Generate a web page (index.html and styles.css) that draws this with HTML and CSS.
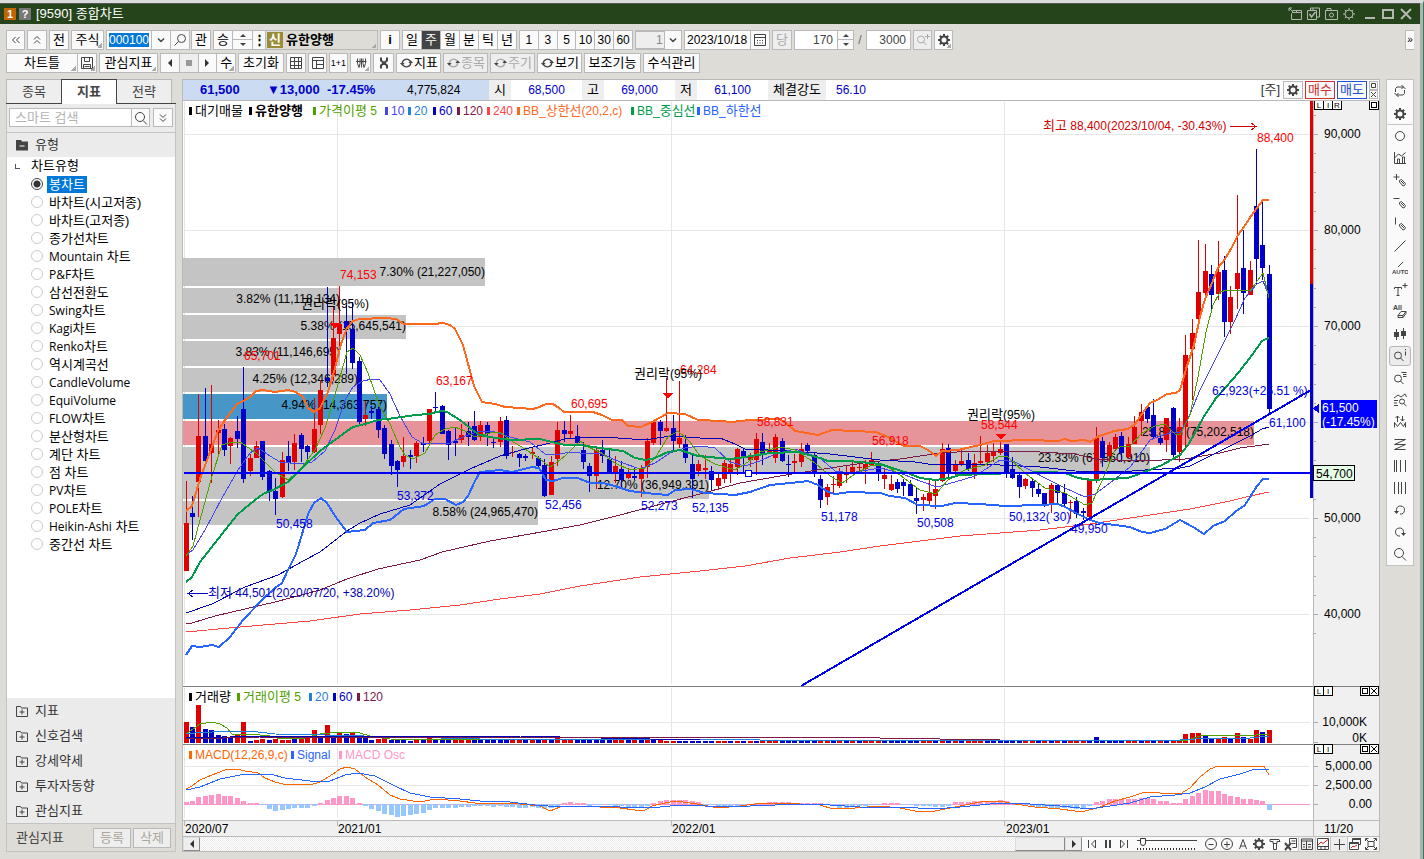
FILE: index.html
```html
<!DOCTYPE html>
<html lang="ko">
<head>
<meta charset="utf-8">
<title>[9590] 종합차트</title>
<link rel="stylesheet" href="styles.css">
</head>
<body>
<svg class="sprite" aria-hidden="true">
  <symbol id="search" viewBox="0 0 16 16"><circle cx="7" cy="7" r="4.500"/><path d="M10 10.500l4 4"/></symbol>
  <symbol id="searchl" viewBox="0 0 16 16"><circle cx="9.500" cy="6.500" r="4"/><path d="M6.500 9.500l-4 4"/></symbol>
  <symbol id="gear" viewBox="0 0 16 16"><circle cx="8" cy="8" r="3.500" stroke-width="2"/><path stroke-width="2" d="M8 2v2.500M8 11.500v2.500M2 8h2.500M11.500 8h2.500M3.800 3.800l1.500 1.500M10.700 10.700l1.500 1.500M12.200 3.800l-1.500 1.500M5.300 10.700l-1.500 1.500"/></symbol>
  <symbol id="geart" viewBox="0 0 16 16"><circle cx="8" cy="8" r="4"/><path d="M8 2v2M8 12v2M2 8h2M12 8h2M3.800 3.800l1.500 1.500M10.700 10.700l1.500 1.500M12.200 3.800l-1.500 1.500M5.300 10.700l-1.500 1.500"/></symbol>
  <symbol id="chev" viewBox="0 0 16 16"><path stroke-width="1.500" d="M5 6.500l3 3 3-3"/></symbol>
  <symbol id="dleft" viewBox="0 0 16 16"><path d="M7.500 5l-3 3 3 3M11.500 5l-3 3 3 3"/></symbol>
  <symbol id="dup" viewBox="0 0 16 16"><path d="M5 7.500l3-3 3 3M5 11.500l3-3 3 3"/></symbol>
  <symbol id="ddown" viewBox="0 0 16 16"><path d="M5 4.500l3 3 3-3M5 8.500l3 3 3-3"/></symbol>
  <symbol id="save" viewBox="0 0 16 16"><path d="M2.500 2.500h11v11h-11zM5.500 2.500v4h5v-4M4.500 13.500v-4h7v4M5.500 11.500h5"/></symbol>
  <symbol id="grid" viewBox="0 0 16 16"><path d="M2.500 2.500h11v11h-11zM2.500 6.500h11M2.500 10.500h11M6.500 2.500v11M10.500 2.500v11"/></symbol>
  <symbol id="layout" viewBox="0 0 16 16"><path d="M2.500 2.500h11v11h-11zM2.500 5.500h11M6.500 5.500v8M6.500 9.500h7"/></symbol>
  <symbol id="won" viewBox="0 0 16 16"><path d="M4.500 3.500v5l1.500 4 1-4v-5M8.500 3.500v9M10 3.500v5l1 4 1.500-4v-5M3 6.500h10.500"/></symbol>
  <symbol id="tools" viewBox="0 0 16 16"><path stroke-width="2" d="M5 2.500v3l6 5v3M11 2.500v3l-6 5v3"/></symbol>
  <symbol id="sync" viewBox="0 0 16 16"><path stroke-width="1.500" d="M3.500 8.500c0-5 6-6 8.500-2.500M12.500 7.500c0 5-6 6-8.500 2.500"/><path class="fill" d="M1 8h5l-2.500 3zM10 8h5l-2.500-3z"/></symbol>
  <symbol id="cal" viewBox="0 0 16 16"><path d="M2.500 2.500h11v11h-11zM2.500 5.500h11M5 8.500h1M7.500 8.500h1M10 8.500h1M5 11h1M7.500 11h1M10 11h1"/></symbol>
  <symbol id="zoomp" viewBox="0 0 16 16"><circle cx="6" cy="7.500" r="3.500"/><path d="M8.500 10l3 3M12.500 2v5M10 4.500h5"/></symbol>
  <symbol id="pop" viewBox="0 0 16 16"><path d="M5.500 4.500h9v9h-10v-6M5 6.500h9M9.500 4.500v2M2 2l4 4M2 5v-3h3"/></symbol>
  <symbol id="copycheck" viewBox="0 0 16 16"><path d="M2.500 4.500h9v9h-9zM5.500 4v-2h9v9h-3M8 2v2.500"/><path stroke-width="1.500" d="M4.500 8l2 3 4-5"/></symbol>
  <symbol id="camera" viewBox="0 0 16 16"><path d="M2.500 4.500h12v9h-12zM4 4.500v-2h4v2"/><circle cx="8.500" cy="9" r="2"/></symbol>
  <symbol id="loop" viewBox="0 0 16 16"><path d="M3.500 9v-3.500l1.500-1.500h6.500l2 2M9.500 2l2 2-2 2M12.500 7v3.500l-1.500 1.500h-6.500l-2-2M6.500 10l-2 2 2 2"/></symbol>
  <symbol id="circle" viewBox="0 0 16 16"><circle cx="8" cy="8" r="4.500"/></symbol>
  <symbol id="chartb" viewBox="0 0 16 16"><path d="M2.500 2v11.500h11.500M2.500 8l4-4 3 2 4-3.500M5.500 13v-4h2v4M10.500 13v-6h2v6"/></symbol>
  <symbol id="pencilp" viewBox="0 0 16 16"><path d="M1.500 5h6M4.500 2v6M7.500 8.500l2-1 4 4-1 2-1.500.5-3.500-4zM9 9l3 3"/></symbol>
  <symbol id="pencilh" viewBox="0 0 16 16"><path d="M1.500 4.500h6M7.500 8.500l2-1 4 4-1 2-1.500.5-3.500-4zM9 9l3 3"/></symbol>
  <symbol id="pencilv" viewBox="0 0 16 16"><path d="M3.500 1.500v7M7.500 8.500l2-1 4 4-1 2-1.500.5-3.500-4zM9 9l3 3"/></symbol>
  <symbol id="line" viewBox="0 0 16 16"><path d="M2.500 13.500l11-11"/></symbol>
  <symbol id="auto" viewBox="0 0 16 16"><path d="M6 7l5-5"/><text x="0" y="14" font-size="6">AUTO</text></symbol>
  <symbol id="textp" viewBox="0 0 16 16"><path d="M2.500 7v-1.500h7V7M6 5.500v8M4.500 13.500h3M10.500 3.500h5M13 1v5"/></symbol>
  <symbol id="eraser" viewBox="0 0 16 16"><text x="1" y="6" font-size="7">All</text><path d="M6 11.500l3-4h5v2l-3 4h-5zM6 11.500h5v2M11 11.500l3-4"/></symbol>
  <symbol id="candles" viewBox="0 0 16 16"><path d="M4.500 3v11M11.500 2v11"/><path class="fill" d="M2 6h5v5h-5zM9 5h5v5h-5z"/></symbol>
  <symbol id="searchi" viewBox="0 0 16 16"><circle cx="6" cy="7.500" r="3.500"/><path d="M8.500 10l3 3M13.500 1v1.200M13.500 3.500v4"/></symbol>
  <symbol id="searche" viewBox="0 0 16 16"><circle cx="6" cy="8.500" r="3.500"/><path d="M8.500 11l3 3M9.500 2.500h5M11 4.500h3.500M11 6.500h3.500"/></symbol>
  <symbol id="searchc" viewBox="0 0 16 16"><path d="M2 6l4-3 3 2 4-3 1.500 3M2 8.500h4M2 11h3M2 13.500h4"/><circle cx="10" cy="9.500" r="2.500"/><path d="M11.500 11.500l3 2.500"/></symbol>
  <symbol id="wave" viewBox="0 0 16 16"><path d="M2.500 13.500v-5l3 4 3-4 3 4 2-4v5M5.500 8v-6M3.500 4l2-2 2 2M10.500 2v5M8.500 5l2 2 2-2"/></symbol>
  <symbol id="zz" viewBox="0 0 16 16"><path d="M2.500 3.500h11M2.500 8.500h11M2.500 13.500h11M13.500 3.500l-11 5M13.500 8.500l-11 5"/></symbol>
  <symbol id="bars5" viewBox="0 0 16 16"><path d="M2.500 2v12M4.500 2v12M8.500 2v12M13.500 2v12"/></symbol>
  <symbol id="bars4" viewBox="0 0 16 16"><path d="M2.500 2v12M6.500 2v12M9.500 2v12M13.500 2v12"/></symbol>
  <symbol id="undo" viewBox="0 0 16 16"><path d="M4.500 9.500v-2a4 4 0 1 1 3.500 4.500"/><path class="fill" d="M2 9h5l-2.500 3z"/></symbol>
  <symbol id="redo" viewBox="0 0 16 16"><path d="M11.500 9.500v-2a4 4 0 1 0-3.500 4.500"/><path class="fill" d="M9 9h5l-2.500 3z"/></symbol>
  <symbol id="first" viewBox="0 0 16 16"><path d="M4.500 4v8M11.500 4v8l-4-4z"/></symbol>
  <symbol id="pause" viewBox="0 0 16 16"><path stroke-width="2" d="M6 4v8M10 4v8"/></symbol>
  <symbol id="last" viewBox="0 0 16 16"><path d="M11.500 4v8M4.500 4v8l4-4z"/></symbol>
  <symbol id="minusc" viewBox="0 0 16 16"><circle cx="8" cy="8" r="5.500"/><path d="M5.500 8.500h5"/></symbol>
  <symbol id="plusc" viewBox="0 0 16 16"><circle cx="8" cy="8" r="5.500"/><path d="M5 8.500h6M8 5.500v6"/></symbol>
  <symbol id="aa" viewBox="0 0 16 16"><path d="M4.500 13l3.500-9.500 3.500 9.500M5.500 10h5"/></symbol>
  <symbol id="hammer" viewBox="0 0 16 16"><path d="M3 3.500h9l1 2h-3v2h-4v-2h-3zM6.500 7.500v6h3v-6"/></symbol>
  <symbol id="xl" viewBox="0 0 16 16"><path d="M6.500 7v-4.500h7v9h-4M8.500 5h4M8.500 7.500h4"/><path stroke-width="2" d="M2 7l6 7M8 7l-6 7"/></symbol>
  <symbol id="panel" viewBox="0 0 16 16"><path d="M2.500 3h11v10.500h-11zM2.500 5h11M7.500 5v8M4 8.500h2M9 8.500h3M4 11h2M9 11h3"/></symbol>
  <symbol id="minichart" viewBox="0 0 16 16"><path d="M2.500 2.500h11v11h-11zM2.500 10.500h11M6 10.500v3M10 10.500v3"/><path class="red" d="M3 9l3-3 2 1.500 5-4"/></symbol>
  <symbol id="cross" viewBox="0 0 16 16"><path d="M8.500 3v11M3 8.500h11"/></symbol>
  <symbol id="multi" viewBox="0 0 16 16"><path d="M5.500 6v-3.500h8v6h-2M2.500 6.500h9v7h-9z"/><path stroke-width="2" d="M6 3h8M2.500 7h9"/><path class="red" d="M4 12l2-2 1 1 3-2"/></symbol>
  <symbol id="full" viewBox="0 0 16 16"><path d="M5 5.500h6v5h-6zM2.500 5v-2.500h3M10.500 2.500h3v2.500M13.500 11v2.500h-3M5.500 13.500h-3v-2.500M3 3l2 2M13 3l-2 2M3 13l2-2M13 13l-2-2"/></symbol>
  <symbol id="foldp" viewBox="0 0 16 16"><path d="M2.500 3.500h4l1 1.500h6v8.500h-11zM8 6.500v5M5.500 9h5"/></symbol>
  <symbol id="foldm" viewBox="0 0 16 16"><path class="fill" d="M2 3h5l1 1.500h6v9h-12z"/><path stroke="#fff" d="M5.500 9h5"/></symbol>
</svg>

<div class="app">
  <header class="title">
    <b class="num">1</b><b class="num help">?</b>
    <h1>[9590] 종합차트</h1>
    <button aria-label="분리"><svg><use href="#pop"/></svg></button>
    <button aria-label="복사"><svg><use href="#copycheck"/></svg></button>
    <button aria-label="캡처"><svg><use href="#camera"/></svg></button>
    <button aria-label="설정"><svg><use href="#geart"/></svg></button>
    <button aria-label="최소화" class="wide first"><svg viewBox="0 0 16 16"><path stroke-width="2" d="M3 12h10"/></svg></button>
    <button aria-label="최대화" class="wide"><svg viewBox="0 0 16 16"><path stroke-width="2" d="M3 4h10v8h-10z"/></svg></button>
    <button aria-label="닫기" class="wide"><svg viewBox="0 0 16 16"><path stroke-width="2" d="M3 3l10 10M13 3l-10 10"/></svg></button>
  </header>

  <div class="bars">
    <div class="bar">
      <button class="w19" aria-label="접기"><svg><use href="#dleft"/></svg></button>
      <button class="w20" aria-label="위로"><svg><use href="#dup"/></svg></button>
      <button class="w20">전</button>
      <button class="w33 corner">주식</button>
      <div class="group w83"><span class="code"><input value="000100" aria-label="종목코드"></span><button class="w20" aria-label="목록"><svg><use href="#chev"/></svg></button><button class="w20" aria-label="찾기"><svg><use href="#searchl"/></svg></button></div>
      <button class="w20">관</button>
      <div class="group w50"><button class="w20">승</button><button class="spin w20" aria-label="이전 다음"><i></i><i></i></button><button class="dots" aria-label="더보기">⋮</button></div>
      <button class="name corner"><b class="tag">신</b><b>유한양행</b></button>
      <button class="w20" aria-label="정보"><b>i</b></button>
      <div class="group even w115"><button>일</button><button class="on">주</button><button>월</button><button>분</button><button>틱</button><button>년</button></div>
      <div class="group even w114 en"><button>1</button><button>3</button><button>5</button><button>10</button><button>30</button><button>60</button></div>
      <div class="group w47 pick"><select aria-label="주기 값"><option>1</option></select><span class="drop"><svg><use href="#chev"/></svg></span></div>
      <div class="group w86"><input class="date" value="2023/10/18" aria-label="날짜"><button class="w20" aria-label="달력"><svg><use href="#cal"/></svg></button></div>
      <button class="w20 off">당</button>
      <div class="group w60"><input class="right" value="170" aria-label="표시 개수"><button class="spin" aria-label="증감"><i></i><i></i></button></div>
      <span class="slash">/</span>
      <input class="total right" value="3000" aria-label="전체 개수">
      <button class="w19 off" aria-label="확대"><svg><use href="#zoomp"/></svg></button>
      <button class="w19 corner" aria-label="설정"><svg><use href="#gear"/></svg></button>
      <button class="more" aria-label="더보기">»</button>
    </div>
    <div class="bar">
      <div class="group w91"><button class="grow corner">차트틀</button><button class="w20 corner" aria-label="저장"><svg><use href="#save"/></svg></button></div>
      <button class="w59 corner">관심지표</button>
      <div class="group even w76"><button aria-label="뒤로"><i class="tl"></i></button><button class="off" aria-label="정지"><i class="sq"></i></button><button aria-label="앞으로"><i class="tr"></i></button><button class="corner">수</button></div>
      <button class="w46">초기화</button>
      <button class="w20" aria-label="표"><svg><use href="#grid"/></svg></button>
      <button class="w19" aria-label="배치"><svg><use href="#layout"/></svg></button>
      <button class="w19 tiny">1+1</button>
      <button class="w21 corner" aria-label="원화"><svg><use href="#won"/></svg></button>
      <button class="w21" aria-label="도구"><svg><use href="#tools"/></svg></button>
      <button class="w45"><svg><use href="#sync"/></svg>지표</button>
      <button class="w45 off"><svg><use href="#sync"/></svg>종목</button>
      <button class="w45 off"><svg><use href="#sync"/></svg>주기</button>
      <button class="w45"><svg><use href="#sync"/></svg>보기</button>
      <button class="w57">보조기능</button>
      <button class="w57">수식관리</button>
    </div>
  </div>

  <div class="work">
    <aside class="side">
      <nav class="tabs"><button>종목</button><button class="active">지표</button><button>전략</button></nav>
      <div class="find"><input placeholder="스마트 검색" aria-label="스마트 검색"><button aria-label="검색"><svg><use href="#search"/></svg></button><button class="fold" aria-label="펼치기"><svg><use href="#ddown"/></svg></button></div>
      <button class="sec"><svg><use href="#foldm"/></svg>유형</button>
      <div class="tree">
        <div class="root"><span class="elbow"></span>차트유형</div>
        <label><input type="radio" name="t" checked><span>봉차트</span></label>
        <label><input type="radio" name="t"><span>바차트(시고저종)</span></label>
        <label><input type="radio" name="t"><span>바차트(고저종)</span></label>
        <label><input type="radio" name="t"><span>종가선차트</span></label>
        <label><input type="radio" name="t"><span><em>Mountain</em> 차트</span></label>
        <label><input type="radio" name="t"><span><em>P&amp;F</em>차트</span></label>
        <label><input type="radio" name="t"><span>삼선전환도</span></label>
        <label><input type="radio" name="t"><span><em>Swing</em>차트</span></label>
        <label><input type="radio" name="t"><span><em>Kagi</em>차트</span></label>
        <label><input type="radio" name="t"><span><em>Renko</em>차트</span></label>
        <label><input type="radio" name="t"><span>역시계곡선</span></label>
        <label><input type="radio" name="t"><span><em>CandleVolume</em></span></label>
        <label><input type="radio" name="t"><span><em>EquiVolume</em></span></label>
        <label><input type="radio" name="t"><span><em>FLOW</em>차트</span></label>
        <label><input type="radio" name="t"><span>분산형차트</span></label>
        <label><input type="radio" name="t"><span>계단 차트</span></label>
        <label><input type="radio" name="t"><span>점 차트</span></label>
        <label><input type="radio" name="t"><span><em>PV</em>차트</span></label>
        <label><input type="radio" name="t"><span><em>POLE</em>차트</span></label>
        <label><input type="radio" name="t"><span><em>Heikin-Ashi</em> 차트</span></label>
        <label><input type="radio" name="t"><span>중간선 차트</span></label>
      </div>
      <button class="sec"><svg><use href="#foldp"/></svg>지표</button>
      <button class="sec"><svg><use href="#foldp"/></svg>신호검색</button>
      <button class="sec"><svg><use href="#foldp"/></svg>강세약세</button>
      <button class="sec"><svg><use href="#foldp"/></svg>투자자동향</button>
      <button class="sec"><svg><use href="#foldp"/></svg>관심지표</button>
      <div class="foot"><span>관심지표</span><button disabled>등록</button><button disabled>삭제</button></div>
    </aside>

    <main class="chart">
      <div class="info">
        <div class="price"><b class="p1">61,500</b><b class="p2">▼13,000</b><b class="p3">-17.45%</b><span class="p4">4,775,824</span></div>
        <span class="lab">시</span><span class="val">68,500</span>
        <span class="lab">고</span><span class="val">69,000</span>
        <span class="lab">저</span><span class="val">61,100</span>
        <span class="lab long">체결강도</span><span class="val">56.10</span>
        <span class="week">[주]</span>
        <button class="w20" aria-label="설정"><svg><use href="#gear"/></svg></button>
        <button class="buy">매수</button><button class="sell">매도</button>
        <span class="mini"><button aria-label="최대화"><svg viewBox="0 0 7 7"><path d="M1.500 1.500h4v4h-4z"/></svg></button><button aria-label="닫기"><svg viewBox="0 0 7 7"><path d="M1 1l5 5M6 1l-5 5"/></svg></button></span>
      </div>
      <svg id="plot" class="plot" viewBox="183 101 1196 736" preserveAspectRatio="xMinYMin meet" role="img" aria-label="유한양행 주봉 차트"></svg>
      <div class="scroll">
        <button class="arrow" aria-label="왼쪽"><i class="tl"></i></button>
        <div class="track"><span class="thumb"></span></div>
        <button class="arrow" aria-label="오른쪽"><i class="tr"></i></button>
        <div class="ctl play">
          <button aria-label="처음"><svg><use href="#first"/></svg></button><button aria-label="일시정지"><svg><use href="#pause"/></svg></button><button aria-label="끝"><svg><use href="#last"/></svg></button>
        </div>
        <input type="range" min="0" max="20" value="1" aria-label="속도">
        <div class="ctl">
          <button aria-label="축소"><svg><use href="#minusc"/></svg></button><button aria-label="확대"><svg><use href="#plusc"/></svg></button><button aria-label="글꼴"><svg><use href="#aa"/></svg></button><button aria-label="설정"><svg><use href="#gear"/></svg></button><button aria-label="도구"><svg><use href="#hammer"/></svg></button><button aria-label="엑셀"><svg><use href="#xl"/></svg></button><button class="on" aria-label="데이터창"><svg><use href="#panel"/></svg></button><button aria-label="미니차트"><svg><use href="#minichart"/></svg></button><button class="on" aria-label="십자선"><svg><use href="#cross"/></svg></button><button aria-label="다중창"><svg><use href="#multi"/></svg></button><button aria-label="전체화면"><svg><use href="#full"/></svg></button>
        </div>
      </div>
    </main>

    <nav class="rail" aria-label="그리기 도구">
      <button aria-label="새로고침"><svg><use href="#loop"/></svg></button>
      <button class="end" aria-label="설정"><svg><use href="#gear"/></svg></button>
      <button aria-label="원"><svg><use href="#circle"/></svg></button>
      <button aria-label="지표 차트"><svg><use href="#chartb"/></svg></button>
      <button aria-label="십자 그리기"><svg><use href="#pencilp"/></svg></button>
      <button aria-label="수평선"><svg><use href="#pencilh"/></svg></button>
      <button aria-label="수직선"><svg><use href="#pencilv"/></svg></button>
      <button aria-label="추세선"><svg><use href="#line"/></svg></button>
      <button aria-label="자동 추세선"><svg><use href="#auto"/></svg></button>
      <button aria-label="텍스트"><svg><use href="#textp"/></svg></button>
      <button aria-label="모두 지우기"><svg><use href="#eraser"/></svg></button>
      <button aria-label="봉"><svg><use href="#candles"/></svg></button>
      <button class="on" aria-label="정보 보기"><svg><use href="#searchi"/></svg></button>
      <button aria-label="목록 보기"><svg><use href="#searche"/></svg></button>
      <button aria-label="차트 검색"><svg><use href="#searchc"/></svg></button>
      <button aria-label="파동"><svg><use href="#wave"/></svg></button>
      <button aria-label="되돌림"><svg><use href="#zz"/></svg></button>
      <button aria-label="피보나치"><svg><use href="#bars5"/></svg></button>
      <button aria-label="등간격"><svg><use href="#bars4"/></svg></button>
      <button aria-label="실행 취소"><svg><use href="#undo"/></svg></button>
      <button aria-label="다시 실행"><svg><use href="#redo"/></svg></button>
      <button aria-label="돋보기"><svg><use href="#search"/></svg></button>
    </nav>
  </div>
</div>
<script src="chart.js"></script>
</body>
</html>
```

FILE: styles.css
```css
* { box-sizing: border-box; }
body { margin: 0; background: #dddcd6; color: #000; font: 12px/16px "Liberation Sans", "Noto Sans CJK KR", sans-serif; }
button, input, select { font: inherit; color: inherit; margin: 0; padding: 0; border: 1px solid #b9b9b9; border-radius: 0; background: #fafafa; outline: 0; }
button { display: flex; align-items: center; justify-content: center; white-space: nowrap; font-size: 13px; position: relative; }
svg { width: 16px; height: 16px; flex: none; fill: none; stroke: #444; }
.sprite { display: none; }
symbol text { fill: #444; stroke: none; font-weight: bold; }
.fill { fill: #444; stroke: none; }
.red { stroke: #d02020; }

.app { display: flex; flex-direction: column; min-height: 100vh; border-top: 3px solid #dcdcdc; border-right: 1px solid #2d8050; box-shadow: inset -3px 0 0 #b0b0b4; padding-right: 3px; }

.title { display: flex; align-items: center; height: 21px; background: #25441c; border-top: 1px solid #555; padding: 0 5px 0 4px; color: #fff; }
.title h1 { font-size: 13px; font-weight: normal; margin: 0; padding-left: 5px; flex: 1; }
.title .num { width: 12px; height: 12px; line-height: 12px; background: #c26400; text-align: center; margin-right: 3px; font-size: 11px; }
.title .help { background: #777; margin-right: 0; }
.title button { width: 18px; height: 18px; border: 0; background: none; }
.title svg { stroke: #b4b8b0; }
.title .wide { width: 18px; }
.title .first { margin-left: 3px; }

.bars { display: flex; flex-direction: column; gap: 3px; padding: 6px; }
.bar { display: flex; gap: 2px; height: 20px; }
.bar > *, .group > * { height: 20px; flex: none; }
.group { display: flex; }
.group > * + * { margin-left: -1px; }
.even > * { flex: 1; }
.en button { font-size: 12px; }
.grow { flex: 1; }
.w19 { width: 19px; } .w20 { width: 20px; } .w21 { width: 21px; } .w33 { width: 33px; }
.w45 { width: 45px; } .w46 { width: 46px; } .w47 { width: 47px; } .w50 { width: 50px; } .w57 { width: 57px; }
.w59 { width: 59px; } .w60 { width: 60px; } .w76 { width: 76px; } .w83 { width: 83px; }
.w86 { width: 86px; } .w91 { width: 91px; } .w114 { width: 114px; } .w115 { width: 115px; }
.corner { background: linear-gradient(135deg, transparent 50%, #aaa 50%) right 1px bottom 1px / 5px 5px no-repeat #fafafa; }
.group input, .group select { flex: 1; min-width: 0; background: #fff; }
.group .code { flex: 1; background: #fff; border: 1px solid #b9b9b9; padding: 2px; display: flex; }
.group .code input { flex: none; width: 40px; border: 0; background: #0078d7; color: #fff; }
.spin { flex-direction: column; gap: 6px; }
.spin i { border: 3px solid transparent; border-top: 0; border-bottom: 3px solid #444; }
.spin i + i { border-bottom: 0; border-top: 3px solid #444; }
.spin::after { content: ""; position: absolute; left: 0; right: 0; top: 8px; height: 1px; background: #b9b9b9; }
.group .spin { flex: none; width: 17px; }
.group .spin.w20 { width: 21px; }
.group .dots { flex: 1; font-weight: bold; }
.name { width: 113px; justify-content: flex-start; background-color: #dddcd6; padding-left: 1px; gap: 3px; }
.tag { background: #9a8c34; color: #fff; width: 16px; height: 16px; line-height: 15px; text-align: center; }
.bar .on { background: #444; color: #fff; }
.pick select { appearance: none; background: #eee; color: #888; padding-left: 20px; border-width: 2px 1px; border-color: #b9b9b9; }
.pick .drop { width: 18px; border: 1px solid #b9b9b9; background: #fafafa; display: flex; align-items: center; }
.date { padding-left: 2px; }
.right { text-align: right; padding-right: 4px; color: #444; background: #fff; }
.total { width: 45px; }
.slash { width: 8px; text-align: center; line-height: 20px; color: #666; }
.off { color: #aaa; background-color: #eee; }
.off svg { stroke: #aaa; }
.more { width: 9px; margin-left: auto; font-size: 10px; border-right: 0; }
.tiny { font-size: 9px; }
.w45 svg { width: 15px; }
.tl, .tr { border: 4px solid transparent; border-left: 0; border-right: 4px solid #333; }
.tr { border-right: 0; border-left: 4px solid #333; }
.sq { width: 6px; height: 6px; background: #999; }

.work { display: flex; flex: 1; gap: 6px; padding: 0 6px 7px; }

.side { width: 170px; display: flex; flex-direction: column; border: 1px solid #c3c3c3; border-top: 0; background: #fff; }
.tabs { display: flex; height: 25px; margin: 0 -1px; border-bottom: 1px solid #444; background: #dddcd6; flex: none; }
.tabs button { width: 56px; height: 24px; background: #eee; color: #444; border-bottom: 0; }
.tabs button + button { margin-left: -1px; }
.tabs .active { background: #fff; border-color: #444; font-weight: bold; height: 25px; z-index: 1; }
.find { display: flex; height: 29px; background: #ebebeb; padding: 4px 2px 5px; border-bottom: 1px solid #c3c3c3; flex: none; }
.find input { flex: 1; min-width: 0; background: #fff; font-size: 13px; padding-left: 5px; }
.find input::placeholder { color: #b4b4b4; }
.find button { width: 19px; margin-left: -1px; }
.find .fold { width: 20px; margin-left: 3px; }
.sec { height: 25px; flex: none; border: 0; background: #ebebeb; justify-content: flex-start; padding-left: 7px; gap: 5px; color: #333; }
.find + .sec { height: 24px; }
.tree { flex: 1; font-size: 13px; }
.tree label, .root { display: flex; align-items: center; height: 18px; padding-left: 24px; gap: 4px; white-space: nowrap; }
.root { padding-left: 8px; gap: 11px; }
.elbow { width: 5px; height: 5px; border-left: 1px solid #555; border-bottom: 1px solid #555; }
.tree em { font: 12px "Open Sans", sans-serif; }
.tree input { appearance: none; width: 12px; height: 12px; border: 1px solid #ccc; border-radius: 50%; background: #fff; }
.tree input:checked { border-color: #444; background: radial-gradient(circle, #333 3px, #fff 4px); }
.tree label span { padding: 0 2px; line-height: 17px; }
.tree input:checked + span { background: #0078d7; color: #fff; }
.foot { display: flex; align-items: center; height: 28px; border-top: 1px solid #c3c3c3; background: #dddcd6; padding: 0 4px 0 9px; gap: 2px; font-size: 13px; color: #444; flex: none; }
.foot span { flex: 1; }
.foot button { width: 38px; height: 20px; background: #eee; color: #aaa89c; }

.chart { flex: 1; min-width: 0; border: 1px solid #b9b9b9; background: #fff; display: flex; flex-direction: column; }
.info { display: flex; height: 21px; line-height: 20px; border-bottom: 1px solid #b9b9b9; flex: none; color: #0000c8; }
.price { display: flex; width: 306px; background: #cbdcf2; font-size: 13px; }
.p1 { width: 84px; padding-left: 17px; }
.p2 { width: 60px; }
.p3 { width: 80px; }
.p4 { color: #000; font-size: 12px; }
.lab { width: 22px; background: #eee; color: #000; text-align: center; font-size: 13px; }
.val { width: 71px; text-align: center; }
.long { width: 58px; }
.long + .val { width: 50px; }
.week { margin-left: auto; color: #333; padding-right: 3px; font-size: 13px; }
.info button { height: 18px; margin: 1px 2px 0 0; }
.info .buy { width: 30px; border-color: #d03030; color: #d03030; }
.info .sell { width: 30px; border-color: #2050d8; color: #2050d8; }
.mini { display: flex; flex-direction: column; padding-top: 1px; }
.info .mini button { width: 9px; height: 9px; margin: 0 1px 0 0; }
.mini svg { width: 7px; height: 7px; }

.plot { display: block; width: 100%; height: auto; flex: 1; min-height: 0; stroke: none; }
.plot text { font-size: 12px; fill: #000; }
.plot .k { font-size: 13px; }
.plot .b { font-weight: bold; }
.plot .s { font-size: 8px; }
.plot rect, .plot path, .plot polyline, .plot line { shape-rendering: crispEdges; }

.scroll { display: flex; height: 14px; flex: none; background: #fafafa; }
.arrow { width: 17px; border: 1px outset #ddd; background: #eee; }
.track { flex: 1; background: repeating-conic-gradient(#ebebeb 0 25%, #fff 0 50%) 0 0 / 2px 2px; display: flex; justify-content: flex-end; }
.thumb { width: 50px; background: #eee; border: 1px outset #ddd; }
.ctl { display: flex; }
.ctl button { width: 16px; border: 0; background: none; }
.ctl .on { background: #eee; outline: 1px solid #c8c8c8; }
.play { padding-left: 2px; width: 55px; }
.scroll input { appearance: none; width: 60px; height: 14px; border: 0; margin-right: 6px; background: linear-gradient(#444, #444) 0 3px / 60px 1px no-repeat, repeating-linear-gradient(90deg, #333 0 1px, transparent 1px 3px) 0 11px / 60px 2px no-repeat; }
.scroll input::-webkit-slider-thumb { appearance: none; width: 6px; height: 8px; border: 1px solid #333; background: #fff; margin-top: -4px; border-radius: 0 0 3px 3px; }

.rail { width: 28px; align-self: flex-start; border: 1px solid #c3c3c3; background: #fafafa; display: flex; flex-direction: column; align-items: center; }
.rail button { width: 22px; height: 22px; border: 1px solid transparent; background: none; }
.rail .end { width: 26px; height: 23px; border-bottom-color: #c3c3c3; }
.rail .on { height: 20px; margin: 1px 0; background: #ececec; border-color: #b4b4b4; border-radius: 3px; }
```

FILE: chart.js
```js
const svg = document.getElementById('plot');
const out = [];
const RED = '#e00000', BLUE = '#0000c8', GRID = '#e6e6e6';
const rect = (x, y, w, h, fill, extra = '') => out.push(`<rect x="${x}" y="${y}" width="${w}" height="${h}" fill="${fill}" ${extra}/>`);
const hangul = s => s.replace(/[가-힣]+/g, m => `<tspan class="k">${m}</tspan>`);
const text = (x, y, s, fill = '#000', cls = '', anchor = 'start') => out.push(`<text x="${x}" y="${y}" style="fill:${fill}" class="${cls}" text-anchor="${anchor}">${hangul(s)}</text>`);
const poly = (pts, color, w = 1) => out.push(`<polyline points="${pts}" fill="none" stroke="${color}" stroke-width="${w}"/>`);
const xAt = i => 186 + Math.floor(6.41 * i);

/* panels and grid */
rect(1313, 101, 66, 736, '#f0f0f0');
rect(183, 820, 1196, 17, '#f0f0f0');
for (let y = 134; y < 640; y += 96) rect(184, y, 1126, 1, GRID);
for (const y of [722, 766, 785]) rect(184, y, 1126, 1, GRID);
for (const x of [184, 337, 671, 1004]) { rect(x, 102, 1, 582, GRID); rect(x, 688, 1, 56, GRID); rect(x, 746, 1, 72, GRID); rect(x, 820, 1, 6, '#b9b9b9'); }

/* volume profile */
const profile = [
  [258, 28, 485, '7.30% (21,227,050)', 276], [288, 25, 340, '3.82% (11,118,134)', 303],
  [315, 24, 406, '5.38% (15,645,541)', 330], [341, 25, 340, '3.83% (11,146,695)', 356],
  [368, 24, 358, '4.25% (12,346,289)', 383], [394, 25, 387, '4.94% (14,363,757)', 409, '#4696c8'],
  [421, 24, 1254, '25.87% (75,202,518)', 436, '#e6949a'], [447, 26, 1150, '23.33% (67,860,910)', 462],
  [473, 26, 709, '12.70% (36,949,391)', 489], [501, 24, 538, '8.58% (24,965,470)', 516]];
for (const [y, h, x, , , c] of profile) rect(183, y, x - 183, h, c || '#c4c4c4');
for (const [, , x, s, ty] of profile) text(x, ty, s, '#000', '', 'end');

/* candles: r/b, high, top, bottom, low (plot coordinates) */
const candles = `r481,523,571,571 b496,513,517,540 r394,436,482,517 b388,436,461,462 r385,444,453,483 r420,430,433,456 b424,429,450,456 r437,438,446,464 b416,431,439,448 b367,409,479,483
r454,458,471,476 r441,446,458,458 b441,441,477,480 b470,471,491,501 b478,491,499,515 r452,460,497,498 b441,456,463,471 r434,443,462,470 b433,435,449,462 b445,446,452,460
r398,429,452,453 r380,390,425,434 b287,378,381,387 r306,338,375,381 r286,324,334,350 b305,321,328,374 b302,329,363,369 b357,361,422,424 r401,415,419,426 b406,411,413,419
b407,409,430,438 b425,428,454,459 b440,444,466,475 b460,461,470,487 r437,456,462,467 b450,455,457,469 r441,443,456,463 b437,443,445,452 r409,409,441,445 b392,407,408,412
b405,406,434,434 b430,431,445,460 b428,441,443,456 r424,435,440,443 b422,431,437,446 b411,426,440,441 r421,425,437,441 b422,425,434,446 b439,442,443,448 r417,421,442,447
b416,420,456,459 r446,452,453,457 b453,454,458,467 b454,456,458,461 r448,452,454,459 b456,458,466,469 b459,465,496,497 r456,462,495,495 r422,430,459,466 b421,430,434,442
r415,431,434,439 b425,436,443,445 b442,450,462,469 b463,466,476,492 r446,450,476,489 b440,450,456,463 b449,459,472,472 r456,466,473,483 b461,469,480,489 r468,474,478,479
b468,476,478,480 r465,468,479,497 r438,441,467,478 r421,422,443,445 b420,422,431,445 r378,428,431,432 b415,428,441,450 r381,438,444,448 b435,444,458,463 b455,464,479,498
r460,464,471,476 r455,468,470,479 b466,471,480,490 r474,478,486,490 r460,463,479,483 r460,464,473,483 r448,449,467,475 b448,451,456,472 r453,456,460,467 r433,439,460,475
b433,442,455,465 r443,450,452,453 r434,437,458,463 b438,441,461,462 b455,464,465,477 r454,461,463,472 r443,449,462,467 b443,445,451,453 b452,455,472,477 b475,479,500,508
r484,487,497,505 r476,484,485,493 r468,474,486,488 r466,474,475,483 r460,467,473,473 r463,467,468,473 r460,464,469,484 r452,460,465,466 b462,465,473,481 r468,475,479,489
r475,484,490,491 b479,482,489,493 b479,482,486,496 b480,484,496,496 b488,498,501,514 r494,497,500,511 r480,493,501,504 r480,489,496,509 r443,449,481,482 b444,448,473,477
r460,465,471,475 r449,461,465,466 b453,460,469,471 r454,463,472,479 r436,461,463,465 r445,453,462,466 r443,451,456,462 r440,449,453,455 b444,444,472,478 b457,469,478,479
b473,475,487,498 r478,479,486,489 b479,481,488,497 b484,489,494,497 b493,493,505,507 r483,485,504,513 b484,485,493,504 b484,493,504,508 r500,502,503,519 b497,501,514,518
b508,511,513,520 r480,480,517,517 r427,438,479,483 b437,441,458,467 r442,445,456,462 r434,437,449,451 b432,436,453,462 r437,444,457,459 r416,427,444,444 r404,412,421,436
b405,407,419,423 b399,415,437,438 b436,438,443,445 r418,418,440,452 b407,408,455,457 r418,427,452,462 r335,355,427,447 r319,333,349,400 r240,292,319,327 r244,271,293,297
b265,274,295,312 r241,272,294,300 b256,270,322,337 r286,297,322,334 r195,273,289,309 b230,268,293,314 r261,270,295,295 b149,206,259,284 b201,245,268,280 b265,274,409,413`.split(/\s+/);
candles.forEach((c, i) => {
  const col = c[0] === 'r' ? RED : BLUE, [h, t, b, l] = c.slice(1).split(',').map(Number), x = xAt(i);
  rect(x, h, 1, Math.max(l - h, 1), col);
  rect(x - 2, t, 5, Math.max(b - t, 1), col);
});

/* moving averages */
poly('186,632 240,627 310,621 360,614 410,610 460,605 500,599 540,594 580,586 640,577 700,571 745,566 790,558 840,552 880,546 920,541 960,536 1000,533 1040,530 1090,524 1130,518 1190,509 1230,501 1250,496 1269,492', '#ff4646');
poly('186,624 192,623 215,616 275,602 320,590 347,579 378,569 420,560 442,552 490,541 530,534 580,525 620,515 665,503 700,494 740,483 780,476 830,468 870,462 900,459 940,453 975,451 1000,451 1040,452 1075,454 1095,459 1140,461 1185,459 1220,453 1240,448 1262,445 1269,444', '#7d1946');
poly('186,613 212,604 245,587 278,575 305,560 320,552 347,531 360,523 380,514 410,505 440,484 470,469 500,456 525,449 550,443 565,439 575,438 605,437 645,440 670,436 700,438 720,438 735,444 745,449 790,451 830,454 880,460 915,462 935,465 970,464 1000,465 1040,467 1075,471 1120,472 1145,470 1180,468 1190,466 1210,456 1240,441 1252,435 1262,429 1269,427', '#0000b4');
poly('186,555 193,550 205,530 222,498 238,470 250,453 258,448 270,456 280,462 300,464 312,462 325,451 335,430 345,400 353,387 363,381 372,379 380,380 390,394 400,416 412,437 422,443 450,443 465,436 480,431 495,432 510,437 530,442 545,454 560,454 570,452 580,453 600,453 620,462 640,469 655,463 670,453 685,448 700,446 715,448 730,462 745,466 760,461 775,454 795,449 820,458 835,471 850,473 880,468 900,473 920,481 937,487 955,482 975,476 1000,460 1015,462 1045,478 1065,488 1085,497 1095,494 1110,483 1120,475 1130,467 1140,454 1150,440 1160,436 1170,433 1180,432 1188,419 1200,390 1214,362 1225,340 1235,320 1245,298 1257,284 1263,281 1269,296', '#4646f0');
poly('186,556 193,546 200,520 212,476 222,445 232,442 240,442 256,453 263,460 275,472 288,480 300,470 315,450 325,428 335,395 342,370 347,352 353,348 360,355 368,373 380,407 390,424 400,447 405,455 413,459 425,453 435,435 445,429 455,427 465,431 475,437 490,433 500,432 510,440 525,449 540,459 550,467 560,460 566,455 580,441 590,448 600,452 615,463 630,470 645,468 655,458 668,437 678,431 690,442 700,456 715,464 735,470 748,462 760,452 780,447 795,450 815,463 830,476 842,483 855,474 870,466 885,465 900,475 920,490 936,494 948,480 965,470 985,465 1000,456 1008,457 1025,473 1045,488 1065,493 1085,505 1092,503 1105,474 1115,450 1122,446 1130,446 1142,433 1155,426 1165,424 1175,434 1180,435 1190,415 1198,377 1206,332 1213,305 1220,292 1227,290 1250,291 1258,280 1263,273 1269,298', '#50a000');
/* Bollinger bands */
poly('186,582 192,577 200,562 237,515 250,504 263,494 275,489 288,482 302,468 320,451 347,431 353,427 365,424 378,420 395,418 415,415 430,414 436,412 443,411 447,412 460,420 475,432 480,435 490,437 510,440 540,439 552,442 565,445 580,445 600,448 623,451 635,458 646,460 655,458 668,452 680,450 698,456 731,459 745,457 770,453 798,452 820,458 828,461 848,461 870,463 880,464 892,468 908,473 920,478 936,480 950,478 960,475 985,474 1050,472 1065,473 1078,478 1092,480 1108,479 1128,478 1147,471 1162,465 1180,455 1188,445 1195,433 1203,418 1216,398 1226,387 1239,372 1252,355 1262,341 1266,339 1269,338', '#009b4b', 2);
poly('186,655 192,646 200,647 212,645 219,647 230,637 243,620 262,600 275,588 282,583 288,570 296,554 303,531 308,514 314,503 321,498 327,503 335,516 347,532 365,530 373,523 390,520 404,509 424,506 435,499 445,499 456,505 463,502 468,496 475,481 480,472 500,470 512,472 532,467 539,468 546,480 553,481 563,478 578,478 590,483 603,483 615,486 630,491 645,493 668,495 675,490 690,489 705,493 735,495 750,492 770,485 800,482 808,481 818,485 828,492 835,494 850,492 880,493 890,496 905,498 918,505 942,506 955,503 980,504 1005,506 1040,505 1058,504 1065,507 1078,514 1090,520 1100,523 1115,525 1130,527 1142,532 1150,533 1165,529 1180,520 1193,527 1204,534 1213,526 1225,521 1235,512 1245,505 1257,486 1263,479 1269,479', '#2864ff', 2);
poly('186,511 192,506 200,479 212,447 218,431 225,420 237,404 243,401 250,397 256,391 263,390 275,392 288,390 296,392 303,397 308,408 314,412 320,408 328,392 335,368 341,344 347,328 353,321 360,319 385,318 396,319 404,324 434,324 443,323 450,325 455,329 463,345 474,386 482,402 495,404 505,407 520,408 532,409 537,408 546,404 553,404 559,408 564,412 593,412 602,415 612,420 622,420 628,426 641,427 652,422 668,413 685,414 698,420 721,421 731,422 750,420 780,419 787,424 795,431 818,435 832,430 876,432 888,437 904,446 920,446 928,450 936,456 942,451 958,450 980,445 994,441 1030,440 1058,441 1065,439 1071,441 1085,440 1090,442 1097,437 1114,431 1128,429 1135,424 1142,414 1150,403 1157,400 1167,394 1176,393 1180,390 1187,366 1194,345 1200,317 1205,299 1212,283 1218,268 1225,259 1232,247 1238,235 1244,227 1251,216 1257,208 1263,200 1269,200', '#ff691e', 2);

/* drawn lines */
poly('184,473 1311,473', '#0000f0', 2);
poly('801,686 1311,390', '#0000f0', 2);
rect(745.5, 470.5, 6, 6, '#fff', 'stroke="#0000f0"');

/* price labels */
for (const [x, y, s] of [[340, 279, '74,153'], [244, 360, '65,701'], [436, 385, '63,167'], [571, 408, '60,695'], [680, 374, '64,284'], [757, 426, '58,831'], [872, 445, '56,918'], [981, 429, '58,544'], [1257, 142, '88,400']]) text(x, y, s, '#f00');
for (const [x, y, s] of [[276, 528, '50,458'], [397, 500, '53,372'], [545, 509, '52,456'], [641, 510, '52,273'], [692, 512, '52,135'], [821, 521, '51,178'], [917, 527, '50,508'], [1009, 521, '50,132( 30)'], [1071, 533, '49,950'], [1212, 395, '62,923(+25.51 %)'], [1269, 427, '61,100']]) text(x, y, s, '#0000e0');
for (const [x, y, tx, ty] of [[301, 308, 334, 323], [634, 378, 667, 393], [967, 419, 1000, 434]]) {
  text(x, y, '권리락(95%)');
  out.push(`<path d="M${tx - 5} ${ty}h11l-5 6z" fill="#f00"/>`);
}
text(1043, 130, '최고 88,400(2023/10/04, -30.43%)', '#d00000');
out.push('<path d="M1230 126.500h26M1251 123l5 3.500-5 3.500" fill="none" stroke="#d00000"/>');
text(208, 597, '최저 44,501(2020/07/20, +38.20%)', '#0000b4');
out.push('<path d="M208 593.500h-20M193 590l-5 3.500 5 3.500" fill="none" stroke="#0000b4"/>');

/* legends */
const legend = (y, items) => { for (const [x, s, c, cls] of items) { rect(x, y - 8, 3, 8, c); text(x + 6, y, s, c, cls); } };
legend(115, [[189, '대기매물', '#000'], [249, '유한양행', '#000', 'b'], [313, '가격이평 5', '#50a000'], [385, '10', '#4646f0'], [408, '20', '#1e82dc'], [433, '60', BLUE], [457, '120', '#7d1946'], [487, '240', '#ff4646'], [517, 'BB_상한선(20,2,c)', '#ff691e'], [631, 'BB_중심선', '#009b4b'], [697, 'BB_하한선', '#2864ff']]);
legend(701, [[189, '거래량', '#000'], [237, '거래이평 5', '#50a000'], [309, '20', '#1e82dc'], [333, '60', BLUE], [357, '120', '#7d1946']]);
legend(759, [[189, 'MACD(12,26,9,c)', '#ff6400'], [291, 'Signal', '#2864ff'], [339, 'MACD Osc', '#ff96c8']]);

/* volume */
const vol = [21, 16, 38, 14, 13, 8, 7, 6, 8, 21, 2, 3, 4, 3, 4, 3, 3, 5, 4, 6, 13, 7, 18, 7, 10, 9, 11, 6, 5, 3, 4, 5, 3, 3, 3, 2, 3, 3, 5, 3, 3];
const volTail = [9, 10, 10, 7, 5, 4, 6, 5, 10, 6, 4, 13, 11, 13];
const volCol = 'rbrbbbbbrrbrrbrrrbrrrbrbrbrbbbrrbbbbrbrbb';
for (let i = 0; i < 170; i++) {
  const h = i < 41 ? vol[i] : i > 155 ? volTail[i - 156] : i === 58 ? 5 : i === 142 ? 6 : i < 75 ? 3 : 2;
  const c = i < 41 ? volCol[i] : i > 155 ? 'rrrbbrrbrbrrbr'[i - 156] : 'bbrbrbbrrbbbrbrr'[(i * 5) % 16];
  rect(xAt(i) - 2, 743 - h, 5, h, c === 'r' ? RED : BLUE);
}
poly('186,734 200,724 212,722 220,724 227,728 232,734 250,734 270,736 280,739 305,738 320,734 340,732 360,733 370,736 390,739 480,740 1110,740 1188,740 1200,736 1220,735 1250,736 1263,734 1269,734', '#50a000');
poly('186,734 195,733 230,731 250,731 275,734 325,735 480,739 760,740 1180,740 1210,738 1250,738 1269,736', '#1e82dc');
poly('186,738 230,737 245,736 480,736 520,736 600,738 700,740 1269,740', '#0000b4');
poly('186,739 260,737 480,737 880,738 1000,740 1269,740', '#7d1946');

/* MACD */
const osc = [2, 3, 7, 8, 9, 10, 8, 8, 6, 3, 1, 1, -1, -5, -7, -6, -5, -4, -4, -4, -2, 1, 4, 6, 8, 8, 6, 1, -2, -5, -7, -10, -11, -13, -12, -11, -10, -9, -6, -4, -4, -4, -4, -3, -3, -2,
  -2, -2, -3, -2, -3, -3, -4, -4, -3, -4, -5, -4, -2, 1, 2, 1, 1, -2, -1, -1, -1, -2, -2, -3, -3, -3, -2, 1, 3, 4, 4, 4, 4, 3, 2, -1, -1, -2, -3, -3, -3, -2, -1, 1, 1, 2, 2, 2, 2, 1, 1, 1, 1, 1,
  -1, -2, -4, -4, -3, -2, -2, -1, -1, 1, 1, 1, -1, -1, -2, -2, -2, -3, -3, -2, 2, 2, 2, 3, 3, 3, 3, 4, 3, 1, -1, -2, -2, -3, -3, -4, -4, -4, -4, -5, -4, -2, 2, 3, 5, 5, 5, 5, 5, 6, 6, 5, 3, 3, 1, 1, 5, 8, 11, 14, 13, 13, 10, 8, 7, 5, 5, 4, 3, -6];
rect(184, 804, 1126, 1, '#ff96c8');
osc.forEach((v, i) => v > 0 ? rect(xAt(i) - 2, 804 - v, 5, v, '#ff96c8') : rect(xAt(i) - 2, 804, 5, -v, '#96c8ff'));
poly('186,789 192,786 200,780 212,775 225,770 237,769 245,771 258,773 265,778 275,782 283,784 300,784 310,785 320,782 333,774 340,769 347,767 355,769 365,777 378,785 390,795 400,799 420,802 435,799 460,801 475,803 500,803 520,804 540,806 550,811 560,807 575,806 600,807 620,808 635,810 645,810 652,806 665,803 675,801 690,803 703,805 718,808 740,806 755,804 770,803 800,804 820,805 833,809 855,808 880,806 900,808 915,811 935,811 955,807 980,802 1000,801 1015,804 1035,807 1060,809 1075,811 1085,811 1100,807 1115,801 1130,797 1145,792 1160,793 1180,794 1190,788 1200,777 1210,769 1218,766 1235,767 1255,766 1264,766 1266,770 1269,775', '#ff6400');
poly('186,790 200,787 220,779 245,774 270,774 285,778 310,781 330,781 345,775 358,773 375,776 395,786 410,793 430,797 460,799 480,801 510,802 535,805 560,807 590,806 620,807 650,808 670,806 690,805 720,807 750,806 800,804 830,805 860,807 900,807 935,809 960,807 980,805 1000,803 1030,804 1060,806 1090,809 1110,806 1130,803 1150,797 1175,795 1190,793 1205,787 1220,779 1240,774 1255,769 1269,770', '#2864ff');

/* panel borders */
rect(183, 686, 1196, 1, '#808080');
rect(183, 744, 1196, 1, '#808080');
rect(183, 820, 1196, 1, '#b9b9b9');
rect(183, 836, 1196, 1, '#b9b9b9');
rect(1313, 101, 1, 736, '#b9b9b9');
rect(1310, 101, 3, 183, RED);
rect(1310, 284, 3, 214, BLUE);

/* value axis */
for (let k = 0; k < 28; k++) rect(1314, Math.round(134 + 19.2 * (k - 1)), k % 5 === 1 ? 4 : 2, 1, '#aaa');
['90,000', '80,000', '70,000', '', '50,000', '40,000'].forEach((s, i) => text(1324, 138 + 96 * i, s));
for (const y of [722, 742, 766, 785, 804]) rect(1314, y, 4, 1, '#aaa');
for (const [y, s] of [[726, '10,000K'], [742, '0K']]) text(1367, y, s, '#000', '', 'end');
for (const [y, s] of [[770, '5,000.00'], [789, '2,500.00'], [808, '0.00']]) text(1372, y, s, '#000', '', 'end');
rect(1321, 400, 56, 28, '#00f');
out.push('<path d="M1313 408.500l6-5v10z" fill="#00f"/>');
text(1322, 412, '61,500', '#fff');
text(1322, 426, '(-17.45%)', '#fff');
rect(1313.5, 465.5, 41, 15, '#e6ffe6', 'stroke="#000"');
text(1316, 478, '54,700');

/* panel buttons */
const box = (x, y, s) => { rect(x + .5, y + .5, 9, 9, '#fff', 'stroke="#000"'); if (s) text(x + 5, y + 8, s, '#000', 's', 'middle'); };
const square = (x, y) => rect(x + 2.5, y + 2.5, 5, 5, 'none', 'stroke="#000"');
box(1314, 100, 'L'); box(1323, 100, 'I'); box(1332, 100, 'R');
box(1369, 100); square(1369, 100);
for (const y of [686, 744]) {
  box(1314, y, 'L'); box(1323, y, 'I'); box(1360, y); box(1369, y); square(1360, y);
  out.push(`<path d="M1371 ${y + 2}l6 6M1377 ${y + 2}l-6 6" stroke="#000"/>`);
}

/* dates */
for (const [x, s] of [[185, '2020/07'], [338, '2021/01'], [672, '2022/01'], [1006, '2023/01'], [1324, '11/20']]) text(x, 833, s);

svg.innerHTML = out.join('');
```
